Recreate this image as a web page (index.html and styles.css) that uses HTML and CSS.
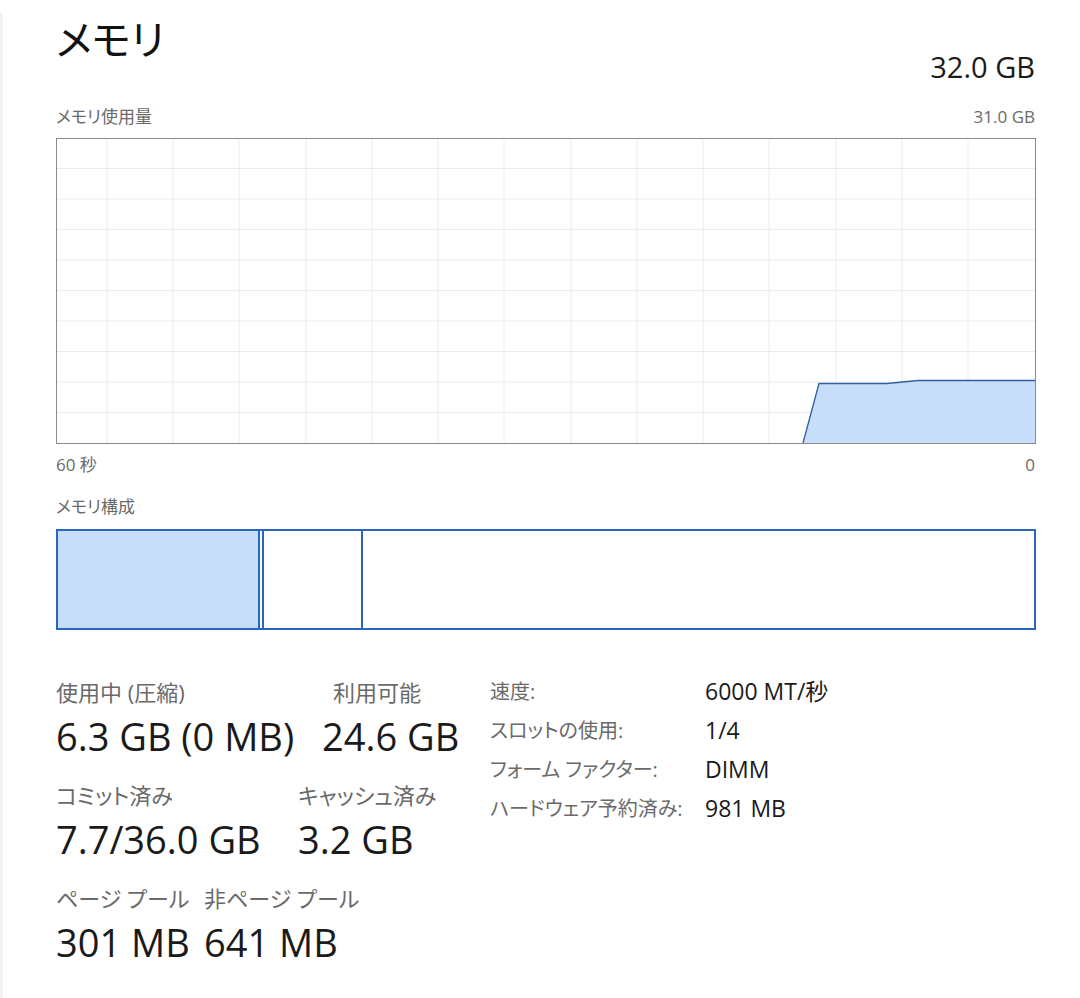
FILE: index.html
```html
<!DOCTYPE html>
<html lang="ja">
<head>
<meta charset="utf-8">
<title>メモリ</title>
<link rel="stylesheet" href="styles.css">
</head>
<body>
<div class="page">
  <div class="content">
    <div class="header">
      <div class="title">メモリ</div>
      <div class="total">32.0 GB</div>
    </div>
    <div class="caption-row">
      <span>メモリ使用量</span>
      <span>31.0 GB</span>
    </div>
    <div class="chart">
      <svg width="980" height="306" viewBox="0 0 980 306">
        <g class="grid">
          <line x1="51" y1="0" x2="51" y2="306"/>
          <line x1="117" y1="0" x2="117" y2="306"/>
          <line x1="183" y1="0" x2="183" y2="306"/>
          <line x1="250" y1="0" x2="250" y2="306"/>
          <line x1="316" y1="0" x2="316" y2="306"/>
          <line x1="382" y1="0" x2="382" y2="306"/>
          <line x1="448" y1="0" x2="448" y2="306"/>
          <line x1="515" y1="0" x2="515" y2="306"/>
          <line x1="581" y1="0" x2="581" y2="306"/>
          <line x1="647" y1="0" x2="647" y2="306"/>
          <line x1="713" y1="0" x2="713" y2="306"/>
          <line x1="780" y1="0" x2="780" y2="306"/>
          <line x1="846" y1="0" x2="846" y2="306"/>
          <line x1="912" y1="0" x2="912" y2="306"/>
          <line x1="0" y1="30.5" x2="980" y2="30.5"/>
          <line x1="0" y1="61" x2="980" y2="61"/>
          <line x1="0" y1="91.5" x2="980" y2="91.5"/>
          <line x1="0" y1="122" x2="980" y2="122"/>
          <line x1="0" y1="152.5" x2="980" y2="152.5"/>
          <line x1="0" y1="183" x2="980" y2="183"/>
          <line x1="0" y1="213.5" x2="980" y2="213.5"/>
          <line x1="0" y1="244" x2="980" y2="244"/>
          <line x1="0" y1="274.5" x2="980" y2="274.5"/>
        </g>
        <polygon class="area" points="747,305 763,245.5 831,245.5 862,242.5 979,242.5 979,305"/>
        <polyline class="line" points="747,305 763,245.5 831,245.5 862,242.5 979,242.5"/>
        <rect class="frame" x="0.5" y="0.5" width="979" height="305"/>
      </svg>
    </div>
    <div class="axis-row">
      <span>60 秒</span>
      <span>0</span>
    </div>
    <div class="section-label">メモリ構成</div>
    <div class="composition">
      <div class="seg seg-used"></div>
      <div class="seg seg-modified"></div>
      <div class="seg seg-standby"></div>
      <div class="seg seg-free"></div>
    </div>
    <div class="stats">
      <div class="stats-left">
        <div class="stat-row">
          <div class="stat stat-w1">
            <div class="stat-label">使用中 (圧縮)</div>
            <div class="stat-value">6.3 GB (0 MB)</div>
          </div>
          <div class="stat">
            <div class="stat-label stat-label-indent">利用可能</div>
            <div class="stat-value">24.6 GB</div>
          </div>
        </div>
        <div class="stat-row">
          <div class="stat stat-w2">
            <div class="stat-label">コミット済み</div>
            <div class="stat-value">7.7/36.0 GB</div>
          </div>
          <div class="stat">
            <div class="stat-label">キャッシュ済み</div>
            <div class="stat-value">3.2 GB</div>
          </div>
        </div>
        <div class="stat-row">
          <div class="stat stat-w3">
            <div class="stat-label">ページ プール</div>
            <div class="stat-value">301 MB</div>
          </div>
          <div class="stat">
            <div class="stat-label">非ページ プール</div>
            <div class="stat-value">641 MB</div>
          </div>
        </div>
      </div>
      <div class="props">
        <div class="prop-label">速度:</div><div class="prop-value">6000 MT/秒</div>
        <div class="prop-label">スロットの使用:</div><div class="prop-value">1/4</div>
        <div class="prop-label">フォーム ファクター:</div><div class="prop-value">DIMM</div>
        <div class="prop-label">ハードウェア予約済み:</div><div class="prop-value">981 MB</div>
      </div>
    </div>
  </div>
</div>
</body>
</html>
```

FILE: styles.css
```css
* { box-sizing: border-box; }
html, body {
  margin: 0;
  padding: 0;
  background: #ffffff;
}
body {
  font-family: "Open Sans", "Noto Sans CJK JP", sans-serif;
  color: #1a1a1a;
  font-feature-settings: "palt";
}
.page {
  margin-top: 13px;
  min-height: 985px;
  border-left: 3px solid #f3f3f3;
}
.content {
  padding: 0 45px 0 53px;
}
.header {
  display: flex;
  justify-content: space-between;
  align-items: flex-end;
  height: 86px;
}
.title {
  font-size: 41px;
  line-height: 58px;
  font-weight: 400;
  align-self: flex-start;
  margin-top: -3px;
  color: #111111;
}
.total {
  font-size: 29px;
  line-height: 36px;
  margin-bottom: 14px;
}
.caption-row, .axis-row {
  display: flex;
  justify-content: space-between;
  font-size: 17px;
  line-height: 24px;
  color: #6a6a6a;
}
.caption-row { height: 39px; padding-top: 6px; }
.chart { height: 306px; }
.chart svg { display: block; }
.grid line { stroke: #ececec; stroke-width: 1; }
.area { fill: #c7defa; }
.line { fill: none; stroke: #2f5f9e; stroke-width: 1.3; }
.frame { fill: none; stroke: #8a8a8a; stroke-width: 1; }
.axis-row { padding-top: 9px; height: 44px; }
.section-label {
  font-size: 17px;
  line-height: 24px;
  color: #6a6a6a;
  height: 41px;
  padding-top: 7px;
}
.composition {
  display: flex;
  width: 980px;
  height: 101px;
  border: 2px solid #2867bd;
}
.seg { height: 100%; border-right: 2px solid #2867bd; }
.seg-used { width: 202px; background: #c7defa; }
.seg-modified { width: 4px; }
.seg-standby { width: 99px; }
.seg-free { flex: 1; border-right: none; }
.stats {
  display: flex;
  padding-top: 48px;
}
.stats-left {
  width: 434px;
  display: flex;
  flex-direction: column;
}
.stat-row {
  display: flex;
  height: 103px;
}
.stat { display: flex; flex-direction: column; }
.stat-w1 { width: 266px; }
.stat-w2 { width: 242px; }
.stat-w3 { width: 148px; }
.stat-label {
  font-size: 22px;
  line-height: 28px;
  color: #6a6a6a;
  white-space: nowrap;
}
.stat-label-indent { padding-left: 11px; }
.stat-value {
  font-size: 38px;
  line-height: 56px;
  margin-top: 2px;
  color: #1a1a1a;
  white-space: nowrap;
  font-feature-settings: normal;
}
.props {
  display: grid;
  grid-template-columns: 215px auto;
  grid-auto-rows: 39px;
  align-content: start;
  margin-top: -6px;
}
.prop-label {
  font-size: 20px;
  line-height: 39px;
  color: #6a6a6a;
  white-space: nowrap;
}
.prop-value {
  font-size: 23px;
  line-height: 39px;
  color: #1a1a1a;
  white-space: nowrap;
}
```
